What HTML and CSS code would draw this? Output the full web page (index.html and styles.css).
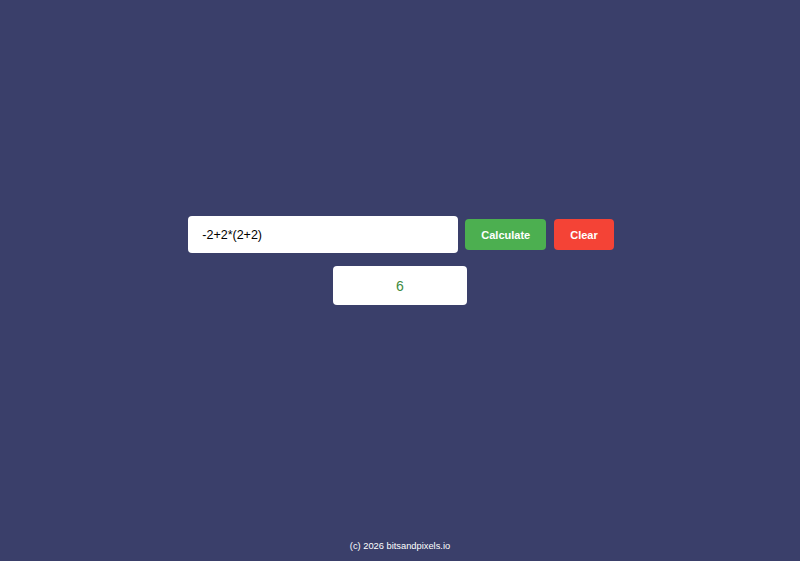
FILE: index.html
```html
<!DOCTYPE html>
<html>
<head>
<meta charset="utf-8">
<link rel="stylesheet" href="styles.css">
</head>
<body>
<main class="main">
  <div class="row">
    <input class="expr" type="text" value="-2+2*(2+2)">
    <button class="btn btn-calc">Calculate</button>
    <button class="btn btn-clear">Clear</button>
  </div>
  <div class="result">6</div>
</main>
<footer class="footer">(c) 2026 bitsandpixels.io</footer>
</body>
</html>
```
FILE: styles.css
```css
html, body {
  margin: 0;
  padding: 0;
}
body {
  background: #3a3f6a;
  height: 561px;
  display: flex;
  flex-direction: column;
  font-family: "Liberation Sans", Arial, sans-serif;
}
.main {
  flex: 1;
  display: flex;
  flex-direction: column;
  align-items: center;
  justify-content: center;
  gap: 13px;
  padding-bottom: 20px;
}
.row {
  display: flex;
  align-items: center;
  gap: 7px;
  margin-left: 2px;
}
.expr {
  width: 270px;
  height: 37px;
  box-sizing: border-box;
  border: none;
  border-radius: 4px;
  padding: 0 14px;
  font-family: "Liberation Sans", Arial, sans-serif;
  font-size: 12.5px;
  color: #000;
  outline: none;
}
.btn {
  height: 31px;
  border: none;
  border-radius: 4px;
  padding: 0 16px;
  color: #fff;
  font-family: "Liberation Sans", Arial, sans-serif;
  font-weight: bold;
  font-size: 11px;
}
.btn-calc { background: #4caf50; }
.btn-clear { background: #f44336; margin-left: 1px; }
.result {
  width: 134px;
  height: 39px;
  box-sizing: border-box;
  background: #fff;
  border-radius: 4px;
  display: flex;
  align-items: center;
  justify-content: center;
  color: #3d8b40;
  font-family: "Liberation Sans", Arial, sans-serif;
  font-size: 14px;
}
.footer {
  text-align: center;
  color: #fff;
  font-size: 9.3px;
  padding: 0 0 10px;
  height: 20px;
  box-sizing: border-box;
}
```
